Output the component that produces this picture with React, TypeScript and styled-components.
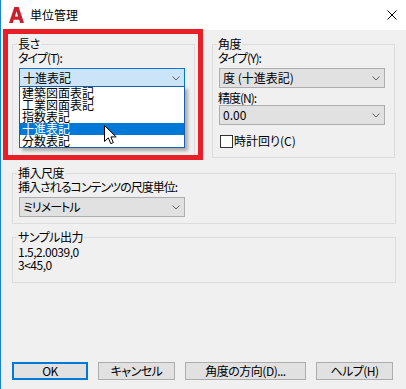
import React from 'react';
import styled, { createGlobalStyle } from 'styled-components';

const GlobalStyle = createGlobalStyle`
  html, body {
    margin: 0;
    padding: 0;
    background: #f0f0f0;
  }
  body {
    font-family: "Noto Sans CJK JP", "Noto Sans", sans-serif;
    font-size: 12px;
    font-feature-settings: "palt";
    color: #000;
  }
`;

const lengthTypes = ['建築図面表記', '工業図面表記', '指数表記', '十進表記', '分数表記'];

const Chevron = () => (
  <svg width="8" height="5" viewBox="0 0 8 5">
    <path d="M0.5 0.5 L4 4 L7.5 0.5" fill="none" stroke="#606060" strokeWidth="1" />
  </svg>
);

const AppLogo = () => (
  <svg width="15" height="16" viewBox="0 0 15 16">
    <path
      d="M0 16 L5.3 0 H9.7 L15 16 H11.2 L10.2 12.8 H4.8 L3.8 16 Z M5.9 9.6 H9.1 L7.5 4.4 Z"
      fill="#c8202c"
      fillRule="evenodd"
    />
  </svg>
);

const CloseIcon = () => (
  <svg width="10" height="10" viewBox="0 0 10 10">
    <path d="M0.5 0.5 L9.5 9.5 M9.5 0.5 L0.5 9.5" stroke="#000" strokeWidth="1" />
  </svg>
);

const Pointer = () => (
  <svg width="13" height="20" viewBox="0 0 13 20">
    <path
      d="M0.5 0.5 L0.5 16.5 L4.3 12.8 L6.8 18.7 L9.3 17.6 L6.9 11.9 L12.2 11.9 Z"
      fill="#fff"
      stroke="#000"
      strokeWidth="1"
      strokeLinejoin="round"
    />
  </svg>
);

const App: React.FC = () => {
  return (
    <>
      <GlobalStyle />
      <Window>
        <TitleBar>
          <AppLogo />
          <Title>単位管理</Title>
          <CloseBtn>
            <CloseIcon />
          </CloseBtn>
        </TitleBar>

        <Body>
          <TopRow>
            <Group $half>
              <Caption>長さ</Caption>
              <FieldLabel>タイプ(T):</FieldLabel>
              <Select $focused>
                <span>十進表記</span>
                <Chevron />
                <DropList>
                  {lengthTypes.map((t) => (
                    <DropItem key={t} $selected={t === '十進表記'}>
                      {t}
                    </DropItem>
                  ))}
                </DropList>
              </Select>
            </Group>

            <Group $half>
              <Caption>角度</Caption>
              <FieldLabel>タイプ(Y):</FieldLabel>
              <Select>
                <span>度 (十進表記)</span>
                <Chevron />
              </Select>
              <FieldLabel $gap>精度(N):</FieldLabel>
              <Select $flush>
                <span>0.00</span>
                <Chevron />
              </Select>
              <CheckRow>
                <CheckBox />
                <span>時計回り(C)</span>
              </CheckRow>
            </Group>
          </TopRow>

          <Group $spaced={8} $bottom={6}>
            <Caption>挿入尺度</Caption>
            <FieldLabel>挿入されるコンテンツの尺度単位:</FieldLabel>
            <Select $tight>
              <span>ミリメートル</span>
              <Chevron />
            </Select>
          </Group>

          <Group $spaced={6} $bottom={11}>
            <Caption>サンプル出力</Caption>
            <SampleText>
              1.5,2.0039,0
              <br />
              3&lt;45,0
            </SampleText>
          </Group>

          <ButtonRow>
            <Button $width={76} $default>OK</Button>
            <Button $width={77}>キャンセル</Button>
            <Button $width={121}>角度の方向(D)...</Button>
            <Button $width={77}>ヘルプ(H)</Button>
          </ButtonRow>
        </Body>

        <Highlight />
        <CursorSpot>
          <Pointer />
        </CursorSpot>
      </Window>
    </>
  );
};

export default App;

const Window = styled.div`
  position: relative;
  width: 406px;
  height: 389px;
  box-sizing: border-box;
  border-left: 1px solid #1883d7;
  display: flex;
  flex-direction: column;
  background: #f0f0f0;
  overflow: hidden;
`;

const TitleBar = styled.div`
  height: 30px;
  flex: none;
  background: #fff;
  display: flex;
  align-items: center;
  padding-left: 8px;
  gap: 6px;
`;

const Title = styled.div`
  font-size: 12px;
  line-height: 14px;
  color: #000;
`;

const CloseBtn = styled.div`
  margin-left: auto;
  margin-right: 9px;
  display: flex;
  align-items: center;
  height: 10px;
  margin-top: -1px;
`;

const Body = styled.div`
  flex: 1;
  display: flex;
  flex-direction: column;
  padding: 7px 10px 9px 11px;
`;

const TopRow = styled.div`
  display: flex;
  gap: 17px;
`;

const Group = styled.fieldset<{ $spaced?: number; $bottom?: number; $half?: boolean }>`
  margin: ${(p) => p.$spaced || 0}px 0 0 0;
  padding: 0 6px ${(p) => (p.$bottom === undefined ? 9 : p.$bottom)}px 5px;
  border: 1px solid #dcdcdc;
  min-width: 0;
  box-sizing: border-box;
  flex: none;
  width: ${(p) => (p.$half ? '183px' : 'auto')};
  display: flex;
  flex-direction: column;
  align-items: flex-start;
`;

const Caption = styled.legend`
  padding: 0 1px;
  margin-left: -1px;
  line-height: 14px;
  font-size: 12px;
  letter-spacing: -0.5px;
`;

const FieldLabel = styled.div<{ $gap?: boolean }>`
  line-height: 14px;
  letter-spacing: -1px;
  margin-top: ${(p) => (p.$gap ? 3 : 0)}px;
`;

const Select = styled.div<{ $focused?: boolean; $flush?: boolean; $tight?: boolean }>`
  position: relative;
  width: 166px;
  height: 20px;
  box-sizing: border-box;
  margin: ${(p) => (p.$flush ? 0 : 3)}px 0 0 1px;
  padding: 0 4px 0 3px;
  border: 1px solid ${(p) => (p.$focused ? '#0078d7' : '#adadad')};
  background: ${(p) => (p.$focused ? '#cce4f7' : '#e1e1e1')};
  display: flex;
  align-items: center;
  justify-content: space-between;
  font-size: 12px;
  letter-spacing: ${(p) => (p.$tight ? '-1px' : '0')};
  line-height: 16px;
`;

const DropList = styled.div`
  position: absolute;
  top: 100%;
  left: -1px;
  width: 166px;
  box-sizing: border-box;
  margin-top: -1px;
  border: 1px solid #1a5fa8;
  background: #fff;
  box-shadow: 3px 3px 3px rgba(0, 0, 0, 0.28);
  letter-spacing: 0;
  z-index: 2;
`;

const DropItem = styled.div<{ $selected?: boolean }>`
  height: 12px;
  line-height: 12px;
  padding-left: 2px;
  font-size: 12px;
  background: ${(p) => (p.$selected ? '#0078d7' : '#fff')};
  color: ${(p) => (p.$selected ? '#fff' : '#000')};
`;

const CheckRow = styled.div`
  display: flex;
  align-items: center;
  gap: 1px;
  margin: 9px 0 0 2px;
  line-height: 14px;
`;

const CheckBox = styled.span`
  width: 13px;
  height: 13px;
  box-sizing: border-box;
  border: 1px solid #333;
  background: #fff;
`;

const SampleText = styled.div`
  line-height: 13px;
  margin-top: 1px;
  font-size: 12px;
  letter-spacing: -0.5px;
`;

const ButtonRow = styled.div`
  margin-top: auto;
  display: flex;
  gap: 10px;
`;

const Button = styled.div<{ $width: number; $default?: boolean }>`
  width: ${(p) => p.$width}px;
  height: 18px;
  box-sizing: border-box;
  border: ${(p) => (p.$default ? '2px solid #0078d7' : '1px solid #adadad')};
  background: #e1e1e1;
  display: flex;
  align-items: center;
  justify-content: center;
  font-size: 12px;
  letter-spacing: -0.5px;
  line-height: 14px;
`;

const Highlight = styled.div`
  position: absolute;
  left: 2px;
  top: 29px;
  width: 200px;
  height: 131px;
  box-sizing: border-box;
  border: 5px solid #e81f27;
  pointer-events: none;
`;

const CursorSpot = styled.div`
  position: absolute;
  left: 103px;
  top: 125px;
  width: 13px;
  height: 20px;
  z-index: 3;
`;
